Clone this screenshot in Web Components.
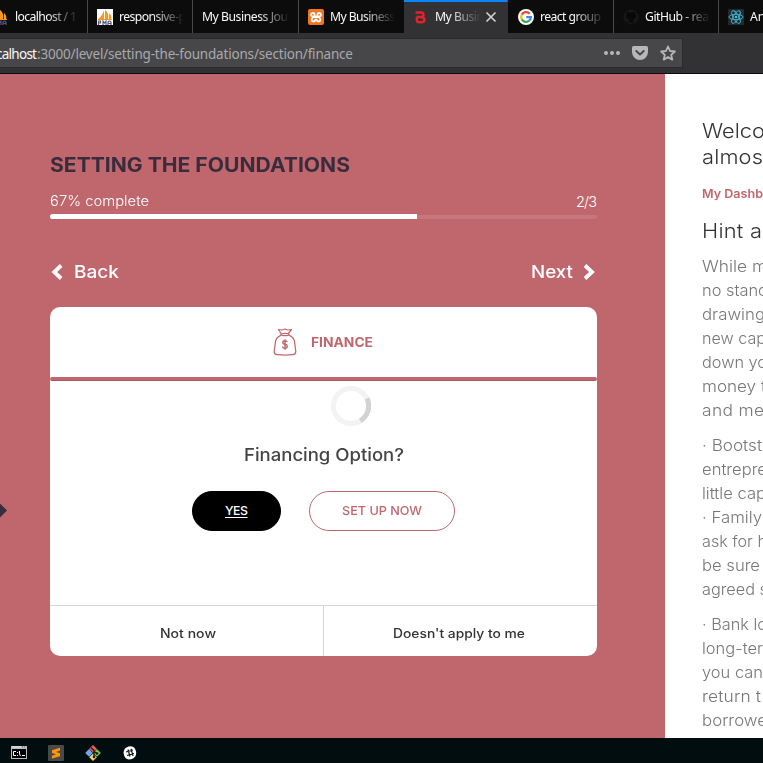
<!DOCTYPE html>
<html lang="en"><head><meta charset="utf-8"><title>Setting the Foundations</title>
<style>html,body{margin:0;width:763px;height:763px;overflow:hidden;background:#fff}</style></head>
<body><journal-desktop></journal-desktop>
<script>
const define=(name,html)=>customElements.define(name,class extends HTMLElement{
  constructor(){super();this.attachShadow({mode:'open'}).innerHTML=html;}
});

/* One line of text stretched or tracked so that it fills the width in "w". */
customElements.define('fit-text',class extends HTMLElement{
  constructor(){super();this.attachShadow({mode:'open'}).innerHTML='<style>:host{display:block;white-space:pre;flex:none}span{display:inline-block;transform-origin:0 50%;text-decoration:var(--line,none);text-underline-offset:2px}</style><span><slot></slot></span>';}
  connectedCallback(){
    const w=+this.getAttribute('w');if(!w)return;
    const s=this.shadowRoot.querySelector('span'),n=this.textContent.length;
    const natural=s.getBoundingClientRect().width;
    const scale=Math.max(1,Math.min(1.12,w/natural));
    s.style.letterSpacing=(w/scale-natural)/(n-1)+'px';
    if(scale>1)s.style.transform='scaleX('+scale+')';
    this.style.width=w+'px';
  }
});

const icons={
pma:'<svg viewBox="0 0 16 16"><rect width="16" height="16" fill="var(--tile,#fff)"/><path d="M7 1C6 5 4 8 1 10h6zM8 1c3 2 4 6 3 9H8zM12 4c2 2 3 4 2 6h-2z" fill="#f7981d"/><path d="M1 10.500h14" stroke="#f7981d"/><path d="M1.500 16v-4h2v2h-2M6 16v-4l1.500 2L9 12v4M11 16v-3l1-1h1l1 1v3m-3-1.500h3" fill="none" stroke="#56567f" stroke-width="1.200"/></svg>',
xampp:'<svg viewBox="0 0 16 16"><rect width="16" height="16" rx="2" fill="#ef7622"/><path d="M8 8C5 8 3 7 3 5.500S6 3.200 6.500 5s0 3-1.500 3.500-2 3.500 0 3.900 2.500-1.400 2-2.400M8 8c3 0 5-1 5-2.500S10 3.200 9.500 5s0 3 1.500 3.500 2 3.500 0 3.900-2.500-1.400-2-2.400M6 8h4" fill="none" stroke="#fff" stroke-width="1.800"/></svg>',
b:'<svg viewBox="0 0 16 16"><path d="M2.500 3.500H8Q10.500 3.500 10.500 5.600Q10.500 8 8 8H3.500M8 8.300Q11.500 8.300 11.500 10.800T8 13.300H6Q3.800 13.300 3.800 11.300V8" fill="none" stroke="#e8202c" stroke-width="2.400"/></svg>',
google:'<svg viewBox="0 0 16 16"><circle cx="8" cy="8" r="8" fill="#fff"/><g fill="none" stroke-width="2.200"><path d="M11.600 4.700A4.900 4.900 0 0 0 3.700 5.700" stroke="#ea4335"/><path d="M3.700 5.700a4.900 4.900 0 0 0 0 4.600" stroke="#fbbc05"/><path d="M3.700 10.300a4.900 4.900 0 0 0 7.500 1.400" stroke="#34a853"/><path d="M11.200 11.700A4.900 4.900 0 0 0 12.900 8.200H8.200" stroke="#4285f4"/></g></svg>',
github:'<svg viewBox="0 0 16 16"><circle cx="8" cy="8" r="7.600" fill="#171717"/><path d="M5.800 15v-2.300C4 13 3.500 12 2.700 11.200M10.200 15v-3q0-1-.7-1.500c2.500-.3 3.500-1.500 3.500-3.500q0-1.300-.8-2.200.3-1.200-.2-2-1 0-2 .8H6Q5 2.700 4 2.800q-.5.900-.2 2Q3 5.700 3 7c0 2 1 3.200 3.500 3.500q-.7.500-.7 1.500" fill="#080808"/></svg>',
react:'<svg viewBox="0 0 16 16"><rect width="16" height="16" rx="1" fill="#222a31"/><g fill="none" stroke="#42bcd5" stroke-width=".9"><ellipse cx="8" cy="8" rx="7" ry="2.700"/><ellipse cx="8" cy="8" rx="7" ry="2.700" transform="rotate(60 8 8)"/><ellipse cx="8" cy="8" rx="7" ry="2.700" transform="rotate(120 8 8)"/></g><circle cx="8" cy="8" r="1.300" fill="#42bcd5"/></svg>',
close:'<svg viewBox="0 0 16 16"><path d="M3.500 3.500l9 9m0-9l-9 9" stroke="#d0d0d1" stroke-width="1.700"/></svg>',
dots:'<svg viewBox="0 0 16 16"><g fill="#b7b7b8"><circle cx="2" cy="8" r="2"/><circle cx="8" cy="8" r="2"/><circle cx="14" cy="8" r="2"/></g></svg>',
pocket:'<svg viewBox="0 0 16 16"><path d="M1.500 1h13Q16 1 16 2.500V7a8 8 0 0 1-16 0V2.500Q0 1 1.500 1z" fill="#b7b7b8"/><path d="M4.300 6L8 9.500 11.700 6" fill="none" stroke="#474749" stroke-width="2" stroke-linecap="round" stroke-linejoin="round"/></svg>',
star:'<svg viewBox="0 0 16 16"><path d="M8 1.500l2 4.500 4.900.5-3.700 3.300 1.100 4.800L8 12.100l-4.300 2.500 1.100-4.800L1.100 6.500 6 6z" fill="none" stroke="#b7b7b8" stroke-width="1.800" stroke-linejoin="round"/></svg>',
left:'<svg viewBox="0 0 16 16"><path d="M12.200 1.500L5.200 8l7 6.500" fill="none" stroke="#fff" stroke-width="3.800"/></svg>',
right:'<svg viewBox="0 0 16 16"><path d="M4 1.500l7 6.500-7 6.500" fill="none" stroke="#fff" stroke-width="3.800"/></svg>',
bag:'<svg viewBox="0 0 24 28"><g fill="none" stroke="#c0676d" stroke-width="1.250" stroke-linejoin="round"><path d="M8.500 6L5.500 1.500 9 2l3-1 3 1 3.500-.5L15 6M8.200 7.200C4 8.800 2.500 11 2.300 15L1.200 23.500q0 3 3 3.200 8 .8 15.600 0 3-.2 3-3.200L21.700 15c-.2-4-1.700-6.200-5.900-7.800"/><ellipse cx="12" cy="6.500" rx="4" ry="1.200"/><path d="M14.300 14q-.5-1.300-2.300-1.300-2.200 0-2.200 1.700t2.200 1.900 2.300 1.900-2.300 1.900-2.400-1.500M12 11.200v10.500" stroke-width="1.400"/></g></svg>',
terminal:'<svg viewBox="0 0 16 16"><path d="M0 1h16v13H0z" fill="#b9bdc0"/><path d="M1 4h14v9H1z" fill="#000"/><path d="M1 2h9" stroke="#e9eaec"/><path d="M11 2h1m1 0h1" stroke="#53779a"/><path d="M5 6.500H2.500v4H5M6 7.500h1m-1 3h1M8.500 6v3l1 2M11 10.500h3" fill="none" stroke="#fff"/></svg>',
sublime:'<svg viewBox="0 0 16 16"><rect width="16" height="16" rx="1" fill="#494949"/><path d="M4 5.200L12 2.800v2.800L8 7l4 1.300v3L4 13.500v-2.800L8 9.300 4 8z" fill="#ff9800"/></svg>',
git:'<svg viewBox="0 0 16 16"><path d="M8 0l3.800 3.800L8 7.500 4.200 3.800z" fill="#f05f5f"/><path d="M4 4.100L7.700 8 4 11.800.2 8z" fill="#6ca8f5"/><path d="M12 4.100L15.800 8 12 11.800 8.300 8z" fill="#73c94d"/><path d="M8 8.500l3.800 3.700L8 16l-3.800-3.800z" fill="#f4d36d"/><path d="M6 2.500l3 3v7m0-6l3 2" fill="none" stroke="#161d16" stroke-width="1.300"/><circle cx="9" cy="12" r="1.300" fill="#161d16"/><circle cx="12" cy="8.500" r="1.300" fill="#161d16"/></svg>',
slack:'<svg viewBox="0 0 16 16"><path d="M4 2.700Q10-.1 12.500 3c3.300 5 1.200 9-1 10.200Q6 15.800 3.500 13C.3 9 1.700 4.200 4 2.700z" fill="#fff"/><path d="M6 4.500l2 7M9 3.800l2 7M4 7l7-2M5 10.500l7-2" stroke="#101719" stroke-width="1.250"/></svg>'
};
customElements.define('app-icon',class extends HTMLElement{
  constructor(){super();this.attachShadow({mode:'open'});}
  connectedCallback(){this.shadowRoot.innerHTML='<style>:host{display:block;width:16px;height:16px;flex:none}svg{display:block;width:100%;height:100%}</style>'+icons[this.getAttribute('name')];}
});

define('browser-tab',`<style>
:host{display:flex;box-sizing:border-box;flex:none;height:33px;align-items:center;background:#0c0c0d;color:#f9f9fa;border-right:1px solid #4a4a4c;padding-left:9px;gap:6px;font:12.2px/20px "Noto Sans","Open Sans",sans-serif;overflow:hidden}
:host([plain]){border-right-color:#0c0c0d}
:host([active]){background:#323234;border-top:2px solid #0a84ff;border-right-color:#323234;padding-bottom:2px}
.label{overflow:hidden;flex:1;margin-right:8px;-webkit-mask-image:linear-gradient(to left,transparent,#000 32px);mask-image:linear-gradient(to left,transparent,#000 32px)}
</style><slot name="icon"></slot><div class="label"><slot></slot></div><slot name="end"></slot>`);

define('browser-bar',`<style>
:host{display:block;height:74px;background:#323234;overflow:hidden;box-sizing:border-box;border-bottom:1px solid #0c0c0d}
nav{display:flex;height:33px;width:880px}
.url{margin-top:5px;box-sizing:border-box;width:683px;height:30px;background:#474749;border:1px solid #2a2a2c;border-left:0;display:flex;align-items:center;font:13.5px/20px "Noto Sans","Open Sans",sans-serif;color:#a9a9ab}
.url fit-text{padding-top:2px}.host{color:#f9f9fa;margin-left:-4px}.actions{margin-left:auto;display:flex;gap:12px;padding-right:6px}
</style><nav>
<browser-tab style="width:88px;padding-left:0;"><app-icon slot="icon" name="pma" style="margin-left:-8px;--tile:#0c0c0d"></app-icon><fit-text w="62" style="margin-left:1px">localhost / 1</fit-text></browser-tab>
<browser-tab style="width:105px"><app-icon slot="icon" name="pma"></app-icon><fit-text w="67">responsive-p</fit-text></browser-tab>
<browser-tab style="width:106px"><fit-text w="86">My Business Jou</fit-text></browser-tab>
<browser-tab plain style="width:105px"><app-icon slot="icon" name="xampp"></app-icon><fit-text w="65">My Business</fit-text></browser-tab>
<browser-tab active style="width:104px"><app-icon slot="icon" name="b"></app-icon><fit-text w="49">My Busin</fit-text><app-icon slot="end" name="close" style="margin:0 8px 0 -12px"></app-icon></browser-tab>
<browser-tab style="width:106px;padding-left:10px"><app-icon slot="icon" name="google"></app-icon><fit-text w="61">react group</fit-text></browser-tab>
<browser-tab style="width:105px"><app-icon slot="icon" name="github"></app-icon><fit-text w="64">GitHub - rea</fit-text></browser-tab>
<browser-tab style="width:105px"><app-icon slot="icon" name="react"></app-icon><span>An</span></browser-tab>
</nav><div class="url"><fit-text class="host" w="41">calhost</fit-text><fit-text w="316">:3000/level/setting-the-foundations/section/finance</fit-text>
<div class="actions"><app-icon name="dots"></app-icon><app-icon name="pocket"></app-icon><app-icon name="star"></app-icon></div></div>`);

define('progress-meter',`<style>
:host{display:block;color:#fff}.row{display:flex;justify-content:space-between;font-size:14.5px;font-weight:350;line-height:20px;height:23px}
.track{height:5px;border-radius:3px;background:linear-gradient(#c0676d 1px,#c5777b 1px);overflow:hidden}.fill{width:367px;height:100%;background:#fff}
</style><div class="row"><fit-text w="99">67% complete</fit-text><fit-text w="21" style="padding-top:1px">2/3</fit-text></div><div class="track"><div class="fill"></div></div>`);

define('pill-button',`<style>
:host{display:flex;box-sizing:border-box;height:40px;border:1px solid #c0676d;border-radius:20px;align-items:center;justify-content:center;font-size:12.3px;font-weight:450;color:#c0676d;padding-bottom:1px}
:host([dark]){background:#000;border-color:#000;color:#fff;--line:underline}
</style><slot></slot>`);

define('load-spinner',`<style>:host{display:block;width:40px;height:40px}</style><svg width="40" height="40" style="display:block"><circle cx="20" cy="20" r="17.500" fill="none" stroke="#f3f3f3" stroke-width="5"/><path d="M36 12.400A17.500 17.500 0 0 1 29.300 34.800" fill="none" stroke="#d2d2d2" stroke-width="5"/></svg>`);

define('section-card',`<style>
:host{display:flex;flex-direction:column;width:547px;height:349px;background:#fff;border-radius:10px;overflow:hidden}
header{height:70px;display:flex;align-items:center;justify-content:center;gap:14px;color:#c0676d;font-size:12.8px;font-weight:700;padding-right:2px}
.rule{height:4px;border-radius:2px;background:linear-gradient(#c0676d 3px,#a9565e 3px);flex:none}
.body{flex:1;display:flex;flex-direction:column;align-items:center}
.question{font-size:17px;font-weight:450;line-height:24px;color:#444;margin-top:17px}
.buttons{display:flex;gap:28px;margin-top:24px}
footer{height:51px;box-sizing:border-box;border-top:1px solid #d6d6d6;display:grid;grid-template-columns:274px 273px;font-size:12.500px;font-weight:450;color:#333}
footer div{display:flex;align-items:center;justify-content:center;padding-top:5px}footer div:first-child{border-right:1px solid #d6d6d6;padding-left:3px}footer div:last-child{padding-right:3px}
</style><header><app-icon name="bag" style="width:24px;height:28px"></app-icon><fit-text w="62">FINANCE</fit-text></header><div class="rule"></div>
<div class="body"><load-spinner style="margin:5px 0 0 54px"></load-spinner><fit-text class="question" w="160">Financing Option?</fit-text>
<div class="buttons"><pill-button dark style="width:89px"><fit-text w="23">YES</fit-text></pill-button><pill-button style="width:146px"><fit-text w="80">SET UP NOW</fit-text></pill-button></div></div>
<footer><div><fit-text w="56">Not now</fit-text></div><div><fit-text w="132">Doesn't apply to me</fit-text></div></footer>`);

define('level-panel',`<style>
:host{display:flex;flex:none;width:665px;box-sizing:border-box;padding:79px 68px 0 50px;flex-direction:column;background:#c0676d;color:#fff}
.title{font-size:19.500px;font-weight:700;line-height:24px;color:#3a2c3d}
progress-meter{margin-top:14px}nav{display:flex;justify-content:space-between;height:24px;margin:41px 0 23px;font-size:17.500px;font-weight:500;line-height:24px}
nav div{display:flex;align-items:center}.arrow{position:absolute;left:-8px;top:503px;width:15px;height:15px;display:block}
</style><fit-text class="title" w="300">SETTING THE FOUNDATIONS</fit-text><progress-meter></progress-meter>
<nav><div style="gap:9px"><app-icon name="left" style="margin-left:-1px"></app-icon><fit-text w="45">Back</fit-text></div><div style="gap:8px"><fit-text w="42">Next</fit-text><app-icon name="right"></app-icon></div></nav>
<section-card></section-card><svg class="arrow" viewBox="0 0 15 15"><path d="M7.500 0L15 7.500 7.500 15 0 7.500z" fill="#3a2c3d"/></svg>`);

define('hint-panel',`<style>
:host{display:block;flex:1;box-sizing:border-box;background:#fff;padding:44px 0 0 37px;overflow:hidden;color:#777;font-size:15.500px;font-weight:300;line-height:24px}
.big{font-size:19.500px;line-height:26px;color:#333}.link{font-size:12.200px;font-weight:600;line-height:20px;color:#c0676d;margin:14px 0}
p{margin:11px 0 0}
</style><div class="big"><fit-text w="63">Welco</fit-text><fit-text w="61">almos</fit-text></div>
<fit-text class="link" w="61">My Dashb</fit-text>
<div class="big" style="margin-bottom:11px"><fit-text w="60">Hint a</fit-text></div>
<fit-text w="65">While m</fit-text><fit-text w="66">no stand</fit-text><fit-text w="63">drawing</fit-text><fit-text w="64">new cap</fit-text><fit-text w="65">down yo</fit-text><fit-text w="64">money t</fit-text><fit-text w="62">and me</fit-text>
<p><fit-text w="60">· Bootst</fit-text><fit-text w="65">entrepre</fit-text><fit-text w="64">little cap</fit-text><fit-text w="60">· Family</fit-text><fit-text w="65">ask for h</fit-text><fit-text w="58">be sure</fit-text><fit-text w="66">agreed s</fit-text></p>
<p><fit-text w="65">· Bank lo</fit-text><fit-text w="61">long-ter</fit-text><fit-text w="61">you can</fit-text><fit-text w="59">return t</fit-text><fit-text w="65">borrowe</fit-text></p>`);

define('task-bar',`<style>:host{display:flex;height:25px;flex:none;background:#020d10;padding:7px 0 0 11px;box-sizing:border-box;gap:21px}</style>
<app-icon name="terminal"></app-icon><app-icon name="sublime"></app-icon><app-icon name="git"></app-icon><app-icon name="slack"></app-icon>`);

define('journal-desktop',`<style>:host{display:flex;flex-direction:column;width:763px;height:763px;overflow:hidden;position:relative;font-family:Inter,"Liberation Sans",sans-serif}browser-bar{flex:none}main{display:flex;height:664px;flex:none}</style>
<browser-bar></browser-bar><main><level-panel></level-panel><hint-panel></hint-panel></main><task-bar></task-bar>`);
</script></body></html>
